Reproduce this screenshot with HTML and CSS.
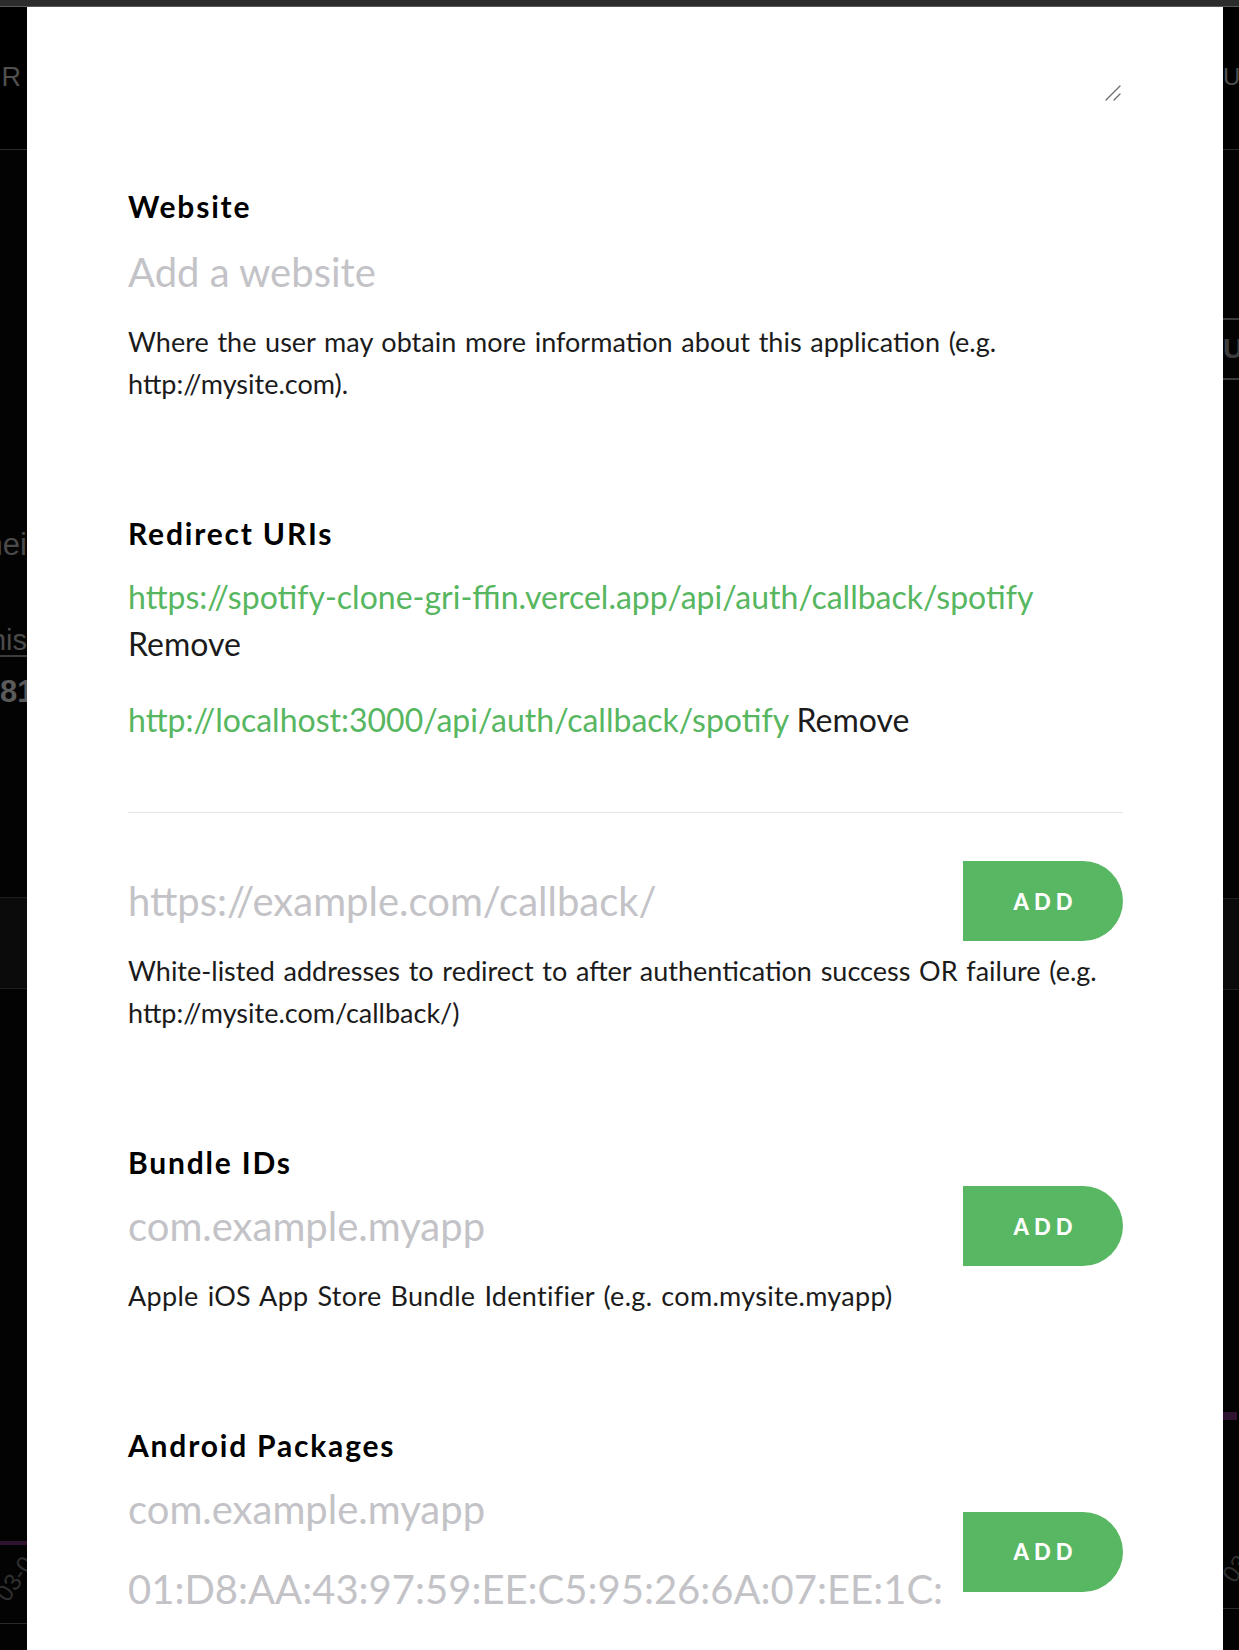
FILE: index.html
```html
<!DOCTYPE html>
<html lang="en">
<head>
<meta charset="utf-8">
<title>Edit settings</title>
<link rel="stylesheet" href="styles.css">
</head>
<body>
<div class="topbar"></div>
<div class="stage">
  <aside class="strip strip-left">
    <div class="bg-header"><span class="bg-nav">USER</span></div>
    <div class="bg-body">
      <div class="bg-line bg-ei">Streamei</div>
      <div class="bg-line bg-is">this</div>
      <div class="bg-line bg-num">81f</div>
      <div class="bg-panel"></div>
      <div class="bg-chart"></div>
      <div class="bg-date">03-0</div>
      <div class="bg-axis"></div>
    </div>
  </aside>

  <main class="modal">
    <div class="resize-row">
      <svg class="grip" width="16" height="16" viewBox="0 0 16 16" aria-hidden="true"><path d="M1 15 L15 1 M9 15 L15 9" fill="none" stroke="#6b6b6b" stroke-width="1.3" stroke-linecap="round"/></svg>
    </div>

    <section class="field field-first">
      <h2 class="field-title">Website</h2>
      <div class="placeholder ph-single">Add a website</div>
      <p class="help help-single">Where the user may obtain more information about this application (e.g. http://mysite.com).</p>
    </section>

    <section class="field">
      <h2 class="field-title">Redirect URIs</h2>
      <ul class="uri-list">
        <li class="uri-item"><span class="uri">https://spotify-clone-gri-ffin.vercel.app/api/auth/callback/spotify</span> <span class="remove">Remove</span></li>
        <li class="uri-item"><span class="uri">http://localhost:3000/api/auth/callback/spotify</span> <span class="remove">Remove</span></li>
      </ul>
      <hr class="divider">
      <div class="add-row add-row-uri">
        <div class="inputs"><div class="placeholder">https://example.com/callback/</div></div>
        <button class="add-btn" type="button">ADD</button>
      </div>
      <p class="help">White-listed addresses to redirect to after authentication success OR failure (e.g. http://mysite.com/callback/)</p>
    </section>

    <section class="field">
      <h2 class="field-title">Bundle IDs</h2>
      <div class="add-row add-row-tight">
        <div class="inputs"><div class="placeholder">com.example.myapp</div></div>
        <button class="add-btn" type="button">ADD</button>
      </div>
      <p class="help help-wide">Apple iOS App Store Bundle Identifier (e.g. com.mysite.myapp)</p>
    </section>

    <section class="field">
      <h2 class="field-title">Android Packages</h2>
      <div class="add-row add-row-android">
        <div class="inputs inputs-stack">
          <div class="placeholder">com.example.myapp</div>
          <div class="placeholder">01:D8:AA:43:97:59:EE:C5:95:26:6A:07:EE:1C:</div>
        </div>
        <button class="add-btn add-btn-low" type="button">ADD</button>
      </div>
    </section>
  </main>

  <aside class="strip strip-right">
    <div class="bg-header"><span class="bg-nav">USER</span></div>
    <div class="bg-body">
      <div class="bg-tab">UP</div>
      <div class="bg-panel bg-panel-r"></div>
      <div class="bg-mark"></div>
      <div class="bg-date bg-date-r">03</div>
      <div class="bg-axis bg-axis-r"></div>
    </div>
  </aside>
</div>
</body>
</html>
```

FILE: styles.css
```css
* { box-sizing: border-box; }

html, body {
  margin: 0;
  padding: 0;
  background: #000;
  height: 100%;
  overflow: hidden;
}

body {
  font-family: "Lato", "Liberation Sans", sans-serif;
}

.topbar {
  height: 7px;
  background: #2c2c2c;
  border-bottom: 1px solid #5a5a5a;
}

.stage {
  display: flex;
  height: 1643px;
}

/* ---------- background page glimpses ---------- */
.strip {
  background: #030303;
  overflow: hidden;
  display: flex;
  flex-direction: column;
  color: #4d4d4d;
}
.strip-left { width: 27px; }
.strip-right { width: 16px; }

.bg-header {
  height: 143px;
  border-bottom: 1px solid #2a2a2a;
  background: #000;
  display: flex;
  align-items: center;
  padding-bottom: 2px;
  white-space: nowrap;
}
.strip-left .bg-header { justify-content: flex-end; padding-right: 5px; }
.strip-right .bg-header { justify-content: flex-start; }

.bg-nav {
  font-family: "Liberation Sans", sans-serif;
  font-size: 27px;
  color: #4f4f4f;
  letter-spacing: 1px;
}
.strip-right .bg-nav { font-size: 24px; letter-spacing: 0; }

.bg-body {
  display: flex;
  flex-direction: column;
  white-space: nowrap;
}
.strip-left .bg-body { align-items: flex-end; }

.bg-line {
  font-family: "Liberation Sans", sans-serif;
  font-size: 31px;
  color: #4a4a4a;
  display: flex;
  justify-content: flex-end;
}
.bg-ei { margin-top: 377px; line-height: 36px; }
.bg-is { margin-top: 62px; line-height: 30px; font-size: 29px; border-bottom: 2px solid #3c3c3c; }
.bg-num {
  align-self: stretch;
  justify-content: flex-start;
  margin-top: 18px;
  line-height: 34px;
  font-weight: 700;
  color: #5a5a5a;
}

.bg-panel {
  align-self: stretch;
  margin-top: 188px;
  height: 92px;
  background: #0b0b0b;
  border-top: 1px solid #1e1e1e;
  border-bottom: 1px solid #1e1e1e;
}
.bg-chart {
  align-self: stretch;
  margin-top: 552px;
  height: 4px;
  background: #2f1230;
}
.bg-date {
  font-family: "Liberation Sans", sans-serif;
  font-size: 24px;
  color: #2f2f2f;
  transform: rotate(-55deg);
  margin-top: 20px;
  margin-right: -12px;
}
.bg-axis {
  align-self: stretch;
  margin-top: 30px;
  height: 1px;
  background: #2a2a2a;
}

.bg-tab {
  margin-top: 168px;
  height: 62px;
  border-top: 2px solid #3a3a3a;
  border-bottom: 2px solid #3a3a3a;
  font-family: "Liberation Sans", sans-serif;
  font-weight: 700;
  font-size: 28px;
  color: #3d3d3d;
  display: flex;
  align-items: center;
}
.bg-panel-r { margin-top: 518px; }
.bg-mark {
  margin-top: 422px;
  width: 14px;
  height: 8px;
  background: #2e1430;
}
.bg-date-r { margin-top: 140px; margin-right: 0; margin-left: 2px; }
.bg-axis-r { margin-top: 20px; }

/* ---------- modal ---------- */
.modal {
  flex: 1;
  background: #fff;
  padding: 0 100px 0 101px;
  overflow: hidden;
  color: #1b1b1b;
}

.resize-row {
  height: 94px;
  display: flex;
  justify-content: flex-end;
  align-items: flex-end;
  padding-right: 2px;
}
.grip { display: block; }

.field { margin-top: 111px; }
.field-first { margin-top: 88px; }

.field-title {
  margin: 0;
  font-size: 30px;
  line-height: 34px;
  font-weight: 700;
  color: #000;
  letter-spacing: 1.8px;
}

.placeholder {
  font-size: 40px;
  line-height: 48px;
  color: #c3c3c7;
  white-space: nowrap;
  overflow: hidden;
}
.ph-single { margin-top: 25px; }

.help {
  margin: 9px 0 0;
  font-size: 27px;
  line-height: 42px;
  word-spacing: 1.8px;
  color: #1b1b1b;
}
.help-single { margin-top: 25px; }
.help-wide { letter-spacing: 0.3px; }

.uri-list {
  list-style: none;
  margin: 23px 0 0;
  padding: 0;
  display: flex;
  flex-direction: column;
  gap: 29px;
}
.uri-item {
  font-size: 32px;
  line-height: 47px;
}
.uri { color: #57b660; }
.remove { color: #1b1b1b; }

.divider {
  margin: 69px 0 0;
  border: 0;
  border-top: 1px solid #e6e6e6;
  height: 0;
}

.add-row {
  display: flex;
  align-items: center;
  gap: 22px;
}
.add-row-uri { margin-top: 48px; }
.add-row-tight { margin-top: 7px; }
.add-row-android { margin-top: 23px; }

.inputs {
  flex: 1;
  min-width: 0;
}
.inputs-stack {
  display: flex;
  flex-direction: column;
  gap: 32px;
}

.add-btn {
  flex: none;
  width: 160px;
  height: 80px;
  border: 0;
  border-radius: 0 40px 40px 0;
  background: #58b762;
  color: #fff;
  font-family: "Lato", "Liberation Sans", sans-serif;
  font-weight: 900;
  font-size: 22px;
  letter-spacing: 5px;
  padding: 0 0 0 5px;
  cursor: pointer;
}
.add-btn-low { margin-top: 5px; }
```
